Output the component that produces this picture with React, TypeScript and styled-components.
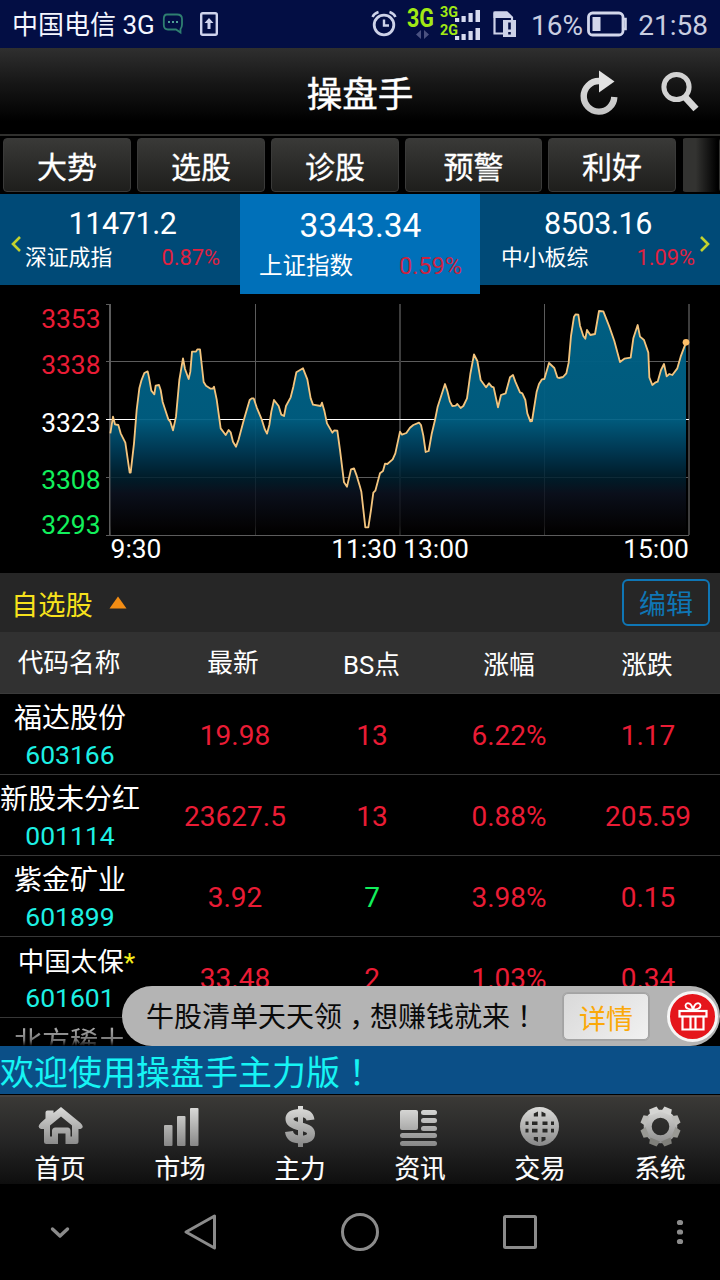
import React from "react";
import styled, { createGlobalStyle, css } from "styled-components";

const RED = "#ea1c35";
const GREEN = "#12f05c";

const GlobalStyle = createGlobalStyle`
  * { box-sizing: border-box; }
  body { margin: 0; background: #000; }
`;

const Screen = styled.div`
  position: relative;
  width: 720px;
  height: 1280px;
  overflow: hidden;
  display: flex;
  flex-direction: column;
  background: #000;
  color: #fff;
  font-family: Roboto, "Noto Sans CJK SC", sans-serif;
  white-space: nowrap;
`;

/* ---------- status bar ---------- */

const StatusBar = styled.header`
  flex: none;
  height: 48px;
  display: flex;
  align-items: center;
  justify-content: space-between;
  padding: 0 9px 0 12px;
  background: #030e44;
`;

const StatusGroup = styled.div`
  display: flex;
  align-items: center;
`;

const Carrier = styled.span`
  width: 150px;
  padding-top: 2px;
  font-size: 26px;
  line-height: 46px;
  color: #f4f6ff;
`;

const StatusText = styled.span<{ $width: number; $end?: boolean }>`
  width: ${(p) => p.$width}px;
  padding-top: 3px;
  text-align: ${(p) => (p.$end ? "right" : "center")};
  padding-right: ${(p) => (p.$end ? 3 : 0)}px;
  font-size: 28px;
  line-height: 45px;
  color: #c9cde0;
`;

/* ---------- title bar ---------- */

const TitleBar = styled.div`
  flex: none;
  height: 88px;
  display: grid;
  grid-template-columns: 160px 1fr 160px;
  align-items: center;
  background: linear-gradient(#2f2f2f, #171717 40%, #000 85%);
  border-bottom: 2px solid #30302e;
`;

const Title = styled.h1`
  grid-column: 2;
  margin: 0;
  padding-top: 7px;
  text-align: center;
  font-size: 35.6px;
  font-weight: 400;
  line-height: 44px;
  -webkit-text-stroke: 0.4px #fff;
`;

const TitleActions = styled.div`
  display: flex;
  gap: 38px;
  padding: 3px 0 0 18px;
`;

/* ---------- category tabs ---------- */

const Tabs = styled.nav`
  flex: none;
  height: 58px;
  display: flex;
  gap: 6px;
  padding: 2px 0 2px 3px;
  overflow: hidden;
`;

const Tab = styled.div<{ $width?: number; $fade?: boolean }>`
  flex: none;
  width: ${(p) => p.$width ?? 128}px;
  height: 54px;
  border-radius: 4px;
  border: 1px solid #3a3a39;
  background: linear-gradient(#393937, #1e1e1c);
  text-align: center;
  font-size: 30px;
  line-height: 57px;
  -webkit-text-stroke: 0.3px #fff;
  ${(p) =>
    p.$fade &&
    css`
      border-color: transparent;
      background: linear-gradient(90deg, #333331 35%, #000 95%);
    `}
`;

/* ---------- index strip ---------- */

const IndexStrip = styled.section`
  position: relative;
  flex: none;
  height: 100px;
  display: flex;
  align-items: flex-start;
`;

const IndexCell = styled.div<{ $active?: boolean; $pad: string }>`
  width: 240px;
  height: ${(p) => (p.$active ? 100 : 91)}px;
  padding: ${(p) => p.$pad};
  background: ${(p) => (p.$active ? "#0070b9" : "#004a77")};
`;

const IndexValue = styled.div<{ $active?: boolean }>`
  text-align: center;
  font-size: ${(p) => (p.$active ? 33.5 : 30.5)}px;
  letter-spacing: ${(p) => (p.$active ? 0 : -0.4)}px;
  line-height: 36px;
`;

const IndexFoot = styled.div<{ $active?: boolean }>`
  display: flex;
  justify-content: space-between;
  align-items: center;
  font-size: ${(p) => (p.$active ? 23.5 : 21.8)}px;
  line-height: ${(p) => (p.$active ? 45 : 32)}px;
`;

const Percent = styled.span<{ $active?: boolean }>`
  color: ${(p) => (p.$active ? "#cb2340" : "#e0213f")};
`;

const Arrow = styled.svg<{ $side: "left" | "right" }>`
  position: absolute;
  top: 41px;
  ${(p) => p.$side}: 9px;
`;

/* ---------- chart ---------- */

const ChartPanel = styled.section`
  flex: none;
  height: 279px;
`;

const ChartSvg = styled.svg`
  display: block;
  font-family: Roboto, sans-serif;
  font-size: 26.4px;
`;

/* ---------- watch list ---------- */

const SectionBar = styled.div`
  flex: none;
  height: 59px;
  display: flex;
  align-items: center;
  padding: 0 10px 0 11px;
  background: #262626;
`;

const SectionTitle = styled.h2`
  margin: 0 16px 0 0;
  padding-top: 6px;
  font-size: 27.2px;
  font-weight: 400;
  line-height: 36px;
  color: #f7e21c;
`;

const EditButton = styled.button`
  width: 88px;
  height: 47px;
  margin-left: auto;
  padding: 5px 0 0;
  border: 2px solid #0f76b5;
  border-radius: 6px;
  background: transparent;
  color: #0f76b5;
  font: 27px/38px Roboto, "Noto Sans CJK SC", sans-serif;
`;

const columns = css`
  display: grid;
  grid-template-columns: 140px 190px 84px 190px 88px;
  justify-items: center;
`;

const TableHead = styled.div`
  ${columns}
  flex: none;
  height: 62px;
  background: #313131;
  border-bottom: 1px solid #3a3a3a;
  font-size: 25.7px;
`;

const HeadCell = styled.span<{ $drop?: number; $shift?: number }>`
  padding-top: ${(p) => p.$drop ?? 1}px;
  padding-right: ${(p) => p.$shift ?? 0}px;
  line-height: 60px;
`;

const TableBody = styled.div`
  flex: none;
  height: 352px;
  overflow: hidden;
`;

const Row = styled.div<{ $fade?: boolean }>`
  ${columns}
  height: 81px;
  border-bottom: 1px solid #373737;
  ${(p) =>
    p.$fade &&
    css`
      height: 28px;
      overflow: hidden;
      border: 0;
      -webkit-mask-image: linear-gradient(rgba(0, 0, 0, 0.65) 40%, rgba(0, 0, 0, 0.45) 80%, transparent);
      mask-image: linear-gradient(rgba(0, 0, 0, 0.65) 40%, rgba(0, 0, 0, 0.45) 80%, transparent);
    `}
`;

const Stock = styled.div`
  display: flex;
  flex-direction: column;
  align-items: center;
  padding-top: 6px;
`;

const StockName = styled.span<{ $starred?: boolean }>`
  padding-left: ${(p) => (p.$starred ? 13 : 0)}px;
  font-size: ${(p) => (p.$starred ? 26.5 : 28)}px;
  line-height: 38px;
`;

const Star = styled.span`
  color: #f5ee1a;
`;

const StockCode = styled.span`
  font-size: 26.5px;
  line-height: 34px;
  color: #1df0e4;
`;

const Value = styled.span<{ $color?: string }>`
  padding-top: 2px;
  font-size: 28px;
  line-height: 80px;
  color: ${(p) => p.$color ?? RED};
`;

/* ---------- promo bubble ---------- */

const Promo = styled.aside`
  position: absolute;
  left: 122px;
  top: 986px;
  width: 598px;
  height: 60px;
  display: flex;
  align-items: center;
  padding: 0 2px 0 24px;
  border-radius: 30px;
  background: #b4b4b4;
  color: #0a0a0a;
`;

const PromoText = styled.span`
  width: 417px;
  padding-top: 4px;
  font-size: 28px;
  line-height: 40px;
`;

/* punctuation centred in its full-width cell */
const Punct = styled.span<{ $lower?: boolean }>`
  font-family: "Noto Sans CJK TC", sans-serif;
  line-height: 1;
  vertical-align: ${(p) => (p.$lower ? "-0.3em" : "baseline")};
`;

const PromoButton = styled.button`
  width: 86px;
  height: 47px;
  padding: 7px 0 0;
  border: 1px solid #a3a3a3;
  border-radius: 5px;
  background: linear-gradient(135deg, #d9d9d9, #f1f1f1);
  box-shadow: 0 0 0 1px #a6a6a6;
  color: #fba90a;
  font: 27px/38px Roboto, "Noto Sans CJK SC", sans-serif;
`;

const GiftBadge = styled.div`
  margin-left: auto;
  width: 51px;
  height: 51px;
  border-radius: 50%;
  border: 3px solid #f6f6f6;
  background: #e5161c;
  display: flex;
  align-items: center;
  justify-content: center;
`;

/* ---------- bottom ---------- */

const Marquee = styled.div`
  flex: none;
  height: 48px;
  background: #0b4f87;
  color: #16f4f4;
  font-size: 34px;
  line-height: 54px;
`;

const TabBar = styled.nav`
  flex: none;
  height: 90px;
  display: grid;
  grid-template-columns: repeat(6, 1fr);
  background: linear-gradient(#3b3a37, #262626 50%, #0e0e0e);
  border-top: 1px solid #000;
  box-shadow: inset 0 2px 0 #45413c;
`;

const TabItem = styled.div`
  display: flex;
  flex-direction: column;
  align-items: center;
  padding-top: 6px;
  font-size: 25.6px;
  line-height: 40px;
  -webkit-text-stroke: 0.2px #fff;
`;

const TabIcon = styled.svg`
  width: 48px;
  height: 48px;
`;

const NavBar = styled.nav`
  flex: none;
  height: 96px;
  display: flex;
  align-items: center;
  justify-content: space-between;
  padding: 0 20px 0 40px;
  background: #000;
`;

const NavIcon = styled.svg`
  width: 40px;
  height: 40px;
  fill: none;
  stroke: #8b8b8b;
  stroke-width: 3.4;
  stroke-linejoin: round;
  stroke-linecap: round;
  &:first-child { margin-right: -20px; }
`;

/* ---------- data ---------- */

// Plot coordinates of each trading session, three units per pixel.
const morning =
  "331,430 339,380 345,403 355,405 362,430 376,458 389,548 392,548 402,460 410,360 418,295 424,272 433,249 443,244 447,262 454,302 463,313 467,287 477,285 482,300 488,336 505,388 511,395 519,421 528,380 538,270 549,205 555,237 566,267 571,245 576,185 588,185 592,178 600,178 611,276 618,287 632,296 638,296 642,290 650,328 662,415 677,435 686,420 692,427 699,455 708,470 716,448 732,388 749,330 755,325 761,325 770,352 785,388 794,417 801,431 808,405 814,365 822,330 836,348 844,374 852,378 858,348 872,322 880,290 889,247 909,235 922,268 932,325 939,344 962,348 966,338 973,362 981,400 997,428 1003,421 1012,422 1020,480 1032,577 1041,590 1053,538 1062,535 1070,557 1080,590 1084,605 1096,712 1105,712 1113,660 1120,608 1126,602 1140,550 1149,543 1155,521 1162,522 1178,508 1186,490 1200,425";
const afternoon =
  "1206,434 1219,429 1230,413 1240,405 1257,398 1263,405 1270,437 1277,486 1286,483 1295,432 1305,390 1313,350 1335,282 1342,303 1350,335 1357,348 1367,347 1372,342 1382,354 1390,348 1401,325 1411,252 1422,193 1432,213 1442,270 1458,292 1467,280 1475,290 1481,292 1494,352 1503,315 1517,310 1530,262 1539,255 1546,275 1560,307 1567,310 1576,330 1582,370 1591,394 1596,393 1610,305 1617,282 1626,268 1633,267 1647,219 1663,234 1672,262 1677,264 1689,261 1699,250 1706,218 1713,138 1722,80 1727,73 1735,74 1740,107 1750,138 1756,146 1761,120 1771,135 1785,132 1797,63 1810,64 1828,110 1843,153 1860,216 1873,206 1892,203 1900,145 1913,105 1920,140 1932,150 1945,188 1948,262 1957,285 1967,277 1973,275 1983,240 1992,222 2000,259 2008,252 2017,255 2032,235 2042,200 2058,157";
const series = `${morning} ${afternoon}`;

const priceLabels = [
  { text: "3353", y: 34, color: RED },
  { text: "3338", y: 80, color: RED },
  { text: "3323", y: 138, color: "#fff" },
  { text: "3308", y: 195, color: GREEN },
  { text: "3293", y: 240, color: GREEN },
];

const timeLabels = [
  { text: "9:30", x: 136 },
  { text: "11:30", x: 364 },
  { text: "13:00", x: 436 },
  { text: "15:00", x: 656 },
];

type StockRow = {
  name: string;
  code: string;
  last: string;
  bs: string;
  bsColor?: string;
  rate: string;
  change: string;
  starred?: boolean;
};

const stocks: StockRow[] = [
  { name: "福达股份", code: "603166", last: "19.98", bs: "13", rate: "6.22%", change: "1.17" },
  { name: "新股未分红", code: "001114", last: "23627.5", bs: "13", rate: "0.88%", change: "205.59" },
  { name: "紫金矿业", code: "601899", last: "3.92", bs: "7", bsColor: GREEN, rate: "3.98%", change: "0.15" },
  { name: "中国太保", code: "601601", last: "33.48", bs: "2", rate: "1.03%", change: "0.34", starred: true },
];

/* ---------- pieces ---------- */

const StatusIconsLeft = () => (
  <svg width="60" height="30" viewBox="0 0 60 30" fill="none">
    <path
      d="M5 5.5H15Q20 5.5 20 10V15.500Q20 18 18.500 20V23.500L14 20.500H6Q1.800 20.500 1.800 16V10Q1.800 5.500 5 5.500Z"
      stroke="#2f7f70"
      strokeWidth="1.8"
    />
    <path d="M6 13h2M10 13h2M14 13h2" stroke="#4f9f96" strokeWidth="2" />
    <rect x="39.200" y="4.200" width="15.600" height="21.600" rx="1.500" stroke="#cfd3ec" strokeWidth="2.400" />
    <path d="M47 9l4.500 5h-3v6h-3v-6h-3z" fill="#cfd3ec" />
  </svg>
);

const StatusIconsRight = () => (
  <svg width="160" height="48" viewBox="370 0 160 48">
    <g fill="none" stroke="#cdd2e8" strokeWidth="2.800">
      <circle cx="384" cy="25" r="9.800" />
      <path d="M384 19.500V25.500H389" strokeWidth="2.400" />
      <path d="M372.500 17Q374 13.500 378.500 12M395.500 17Q394 13.500 389.500 12" strokeWidth="2.400" />
    </g>
    <g fill="#a2ea14" fontFamily="Roboto, sans-serif" fontWeight="700">
      <text x="407" y="26.500" fontSize="25" textLength="27" lengthAdjust="spacingAndGlyphs">3G</text>
      <text x="440" y="17" fontSize="15" textLength="18" lengthAdjust="spacingAndGlyphs">3G</text>
      <text x="440" y="34.500" fontSize="15" textLength="18" lengthAdjust="spacingAndGlyphs">2G</text>
    </g>
    <path d="M421 30v9l-5-4.500zM424 30v9l5-4.500z" fill="#4a5180" />
    {[22, 40].map((y) => (
      <g key={y} fill="#d7dbef">
        <rect x="455" y={y - 4} width="4.200" height="4" />
        <rect x="461.500" y={y - 6} width="4.200" height="6" />
        <rect x="468.500" y={y - 9} width="4.200" height="9" />
        <rect x="475.500" y={y - 12} width="4.500" height="12" />
      </g>
    ))}
    <path d="M494.500 12.500H507L512 17.500V21M494.500 12.500V33.500H504" fill="none" stroke="#cdd2e8" strokeWidth="2.200" />
    <path d="M493.500 11.500H507L513 18H493.500z" fill="#cdd2e8" />
    <rect x="503" y="20" width="13" height="17" fill="#cdd2e8" />
    <path d="M509.500 22.500v7M509.500 32v2.500" stroke="#030e44" strokeWidth="2.600" />
  </svg>
);

const Battery = () => (
  <svg width="44" height="28" viewBox="0 0 44 28" fill="none">
    <rect x="4.500" y="3" width="34.500" height="22" rx="4" stroke="#d3d7eb" strokeWidth="2.800" />
    <rect x="8.500" y="7" width="8" height="14" fill="#d3d7eb" />
    <path d="M39.500 9h2v10h-2" stroke="#d3d7eb" strokeWidth="2.600" />
  </svg>
);

const RefreshIcon = () => (
  <svg width="42" height="46" viewBox="0 0 42 46">
    <path d="M21 11A15.300 15.300 0 1 0 36.300 27" fill="none" stroke="url(#silver)" strokeWidth="6.400" />
    <path d="M21 0.500L36.500 11.500L21 22.500z" fill="#e2e2e2" />
  </svg>
);

const SearchIcon = () => (
  <svg width="42" height="46" viewBox="0 0 42 46" fill="none">
    <circle cx="18.500" cy="17" r="12.600" stroke="#d2d2d2" strokeWidth="5" />
    <path d="M27 27L38 39" stroke="#d6d6d6" strokeWidth="7" />
  </svg>
);

const IntradayChart = () => (
  <ChartSvg width="720" height="279" viewBox="0 294 720 279">
    <defs>
      <linearGradient id="area" gradientUnits="userSpaceOnUse" x1="0" y1="0" x2="0" y2="735">
        <stop offset="0" stopColor="#005f83" />
        <stop offset="0.53" stopColor="#005f83" stopOpacity="0.95" />
        <stop offset="0.66" stopColor="#003b57" stopOpacity="0.92" />
        <stop offset="0.77" stopColor="#00202f" stopOpacity="0.85" />
        <stop offset="0.83" stopColor="#0c1220" stopOpacity="0.85" />
        <stop offset="0.96" stopColor="#050406" stopOpacity="0.8" />
        <stop offset="1" stopColor="#000" stopOpacity="0.5" />
      </linearGradient>
    </defs>
    <g stroke="#5c5c5c" strokeWidth="1">
      <path d="M106 361.500H689M106 477.500H689M106 535.500H689" />
      <path d="M255.500 304V535M544.500 304V535" />
      <path d="M400 304V535M689 304V535" strokeWidth="2" stroke="#3d3d3d" />
      <path d="M106 304.500H111" />
      <path d="M110 304V535" strokeWidth="2" />
    </g>
    <path d="M106 419.500H689" stroke="#fff" strokeWidth="1.200" />
    <g transform="translate(0 290) scale(0.333333)">
      <polygon points={`331,735 ${series} 2058,735`} fill="url(#area)" />
      <polyline points={series} fill="none" stroke="#f3c47e" strokeWidth="5.500" strokeLinejoin="round" />
      <circle cx="2058" cy="157" r="10" fill="#fcbe68" />
    </g>
    {priceLabels.map((l) => (
      <text key={l.text} x="100.500" y={l.y + 294} fill={l.color} textAnchor="end">
        {l.text}
      </text>
    ))}
    {timeLabels.map((l) => (
      <text key={l.text} x={l.x} y="558" fill="#fff" textAnchor="middle">
        {l.text}
      </text>
    ))}
  </ChartSvg>
);

const gearTeeth = Array.from({ length: 8 }, (_, i) => i * 45 + 22.5);

const tabItems = [
  {
    label: "首页",
    icon: (
      <path
        d="M25 6L44.500 22Q49 26.500 44.500 28H42.500V40.500Q42.500 43 40 43H29.500V32.500H22V43H10.500Q8 43 8 40.500V28H5Q0.500 26.500 4.500 22L9.500 17.500V11.500Q9.500 9.500 11.500 9.500H17.500V12ZM25 15.500L14 24.500V35.500H16V30Q16 26.500 19.500 26.500H31.500Q34.500 26.500 34.500 30V35.500H36V24.500Z"
        fillRule="evenodd"
      />
    ),
  },
  {
    label: "市场",
    icon: (
      <>
        <rect x="8" y="24" width="8.500" height="21" rx="1" />
        <rect x="21" y="15" width="8.500" height="30" rx="1" />
        <rect x="34" y="7" width="8.500" height="38" rx="1" />
      </>
    ),
  },
  {
    label: "主力",
    icon: (
      <>
        <path
          d="M34.500 19Q33.500 12 24.500 12Q13.500 12 13.500 18Q13.500 23.500 24.500 25.500Q35 27.500 35 32.500Q35 38.500 25 38.500Q14 38.500 13 30.500"
          fill="none"
          stroke="url(#metal)"
          strokeWidth="8"
        />
        <path d="M22 5h5v41h-5z" />
      </>
    ),
  },
  {
    label: "资讯",
    icon: (
      <>
        <rect x="4" y="9" width="18" height="20" rx="2" />
        <rect x="25" y="9" width="16" height="5" rx="2.500" />
        <rect x="25" y="17" width="16" height="5" rx="2.500" />
        <rect x="25" y="25" width="16" height="5" rx="2.500" />
        <rect x="4" y="32" width="37" height="5" rx="2.500" />
        <rect x="4" y="40" width="37" height="5" rx="2.500" />
      </>
    ),
  },
  {
    label: "交易",
    icon: (
      <>
        <circle cx="23.500" cy="25.500" r="19.500" />
        <path
          d="M17.800 15.500V12.500L22 10.500V15.500ZM25.500 10.500L29.500 12.500V15.500H25.500ZM17.800 36V39L22 41V36ZM25.500 41L29.500 39V36H25.500Z"
          fill="#292927"
        />
        <path
          d="M16 22.200H21.500M26.500 22.200H31.500M16 29.600H21.500M26.500 29.600H31.500M9.500 22.200H12.500M35 22.200H38M9.500 29.600H12.500M35 29.600H38"
          fill="none"
          stroke="#292927"
          strokeWidth="3.600"
        />
      </>
    ),
  },
  {
    label: "系统",
    icon: (
      <>
        <circle cx="24.500" cy="25.500" r="12.800" fill="none" stroke="url(#metal)" strokeWidth="8" />
        {gearTeeth.map((a) => (
          <path key={a} d="M19.300 11.500L20.500 5.500H28.500L29.700 11.500z" transform={`rotate(${a} 24.5 25.5)`} fill={`hsl(60 2% ${Math.round(66 + 18 * Math.cos((a * Math.PI) / 180))}%)`} />
        ))}
      </>
    ),
  },
];

const GiftIcon = () => (
  <svg width="32" height="32" viewBox="0 0 32 32" fill="none" stroke="#fff" strokeWidth="2.200">
    <rect x="2.500" y="11" width="27" height="5.500" />
    <path d="M5.500 16.500V29.500H26.500V16.500M13.500 17V29M18.500 17V29" />
    <path
      d="M16 9.500Q8.500 9.500 8.500 5.500Q9 2.500 12.500 3.500Q15 5 16 9.500Q17 5 19.500 3.500Q23 2.500 23.500 5.500Q23.500 9.500 16 9.500Z"
      strokeWidth="1.800"
    />
  </svg>
);

const GradientDefs = styled.svg`
  position: absolute;
  width: 0;
  height: 0;
`;

export default function App() {
  return (
    <Screen>
      <GlobalStyle />
      <GradientDefs>
        <defs>
          <linearGradient id="metal" gradientUnits="userSpaceOnUse" x1="0" y1="5" x2="0" y2="46">
            <stop offset="0" stopColor="#dededc" />
            <stop offset="1" stopColor="#858585" />
          </linearGradient>
          <linearGradient id="silver" gradientUnits="userSpaceOnUse" x1="0" y1="0" x2="0" y2="46">
            <stop offset="0" stopColor="#e2e2e2" />
            <stop offset="1" stopColor="#c2c2c2" />
          </linearGradient>
        </defs>
      </GradientDefs>

      <StatusBar>
        <StatusGroup>
          <Carrier>中国电信 3G</Carrier>
          <StatusIconsLeft />
        </StatusGroup>
        <StatusGroup>
          <StatusIconsRight />
          <StatusText $width={54}>16%</StatusText>
          <Battery />
          <StatusText $width={83} $end>21:58</StatusText>
        </StatusGroup>
      </StatusBar>

      <TitleBar>
        <Title>操盘手</Title>
        <TitleActions>
          <RefreshIcon />
          <SearchIcon />
        </TitleActions>
      </TitleBar>

      <Tabs>
        <Tab>大势</Tab>
        <Tab>选股</Tab>
        <Tab>诊股</Tab>
        <Tab $width={137}>预警</Tab>
        <Tab>利好</Tab>
        <Tab $width={38} $fade />
      </Tabs>

      <IndexStrip>
        <IndexCell $pad="12px 20px 0 25px">
          <IndexValue>11471.2</IndexValue>
          <IndexFoot>
            <span>深证成指</span>
            <Percent>0.87%</Percent>
          </IndexFoot>
        </IndexCell>
        <IndexCell $active $pad="14px 18px 0 19px">
          <IndexValue $active>3343.34</IndexValue>
          <IndexFoot $active>
            <span>上证指数</span>
            <Percent $active>0.59%</Percent>
          </IndexFoot>
        </IndexCell>
        <IndexCell $pad="12px 25px 0 21px">
          <IndexValue>8503.16</IndexValue>
          <IndexFoot>
            <span>中小板综</span>
            <Percent>1.09%</Percent>
          </IndexFoot>
        </IndexCell>
        <Arrow $side="left" width="12" height="18" viewBox="0 0 12 18" fill="none" stroke="#c3d22e" strokeWidth="2.600">
          <path d="M11 2L4 9L11 16" />
        </Arrow>
        <Arrow $side="right" width="12" height="18" viewBox="0 0 12 18" fill="none" stroke="#c3d22e" strokeWidth="2.600">
          <path d="M2 2L9 9L2 16" />
        </Arrow>
      </IndexStrip>

      <ChartPanel>
        <IntradayChart />
      </ChartPanel>

      <SectionBar>
        <SectionTitle>自选股</SectionTitle>
        <svg width="18" height="13" viewBox="0 0 18 13">
          <path d="M9 0.500L17.500 12.500H0.500z" fill="#f38d14" />
        </svg>
        <EditButton>编辑</EditButton>
      </SectionBar>

      <TableHead>
        <HeadCell $shift={2}>代码名称</HeadCell>
        <HeadCell $shift={4}>最新</HeadCell>
        <HeadCell $drop={3} $shift={1}>BS点</HeadCell>
        <HeadCell $drop={3}>涨幅</HeadCell>
        <HeadCell $drop={3} $shift={2}>涨跌</HeadCell>
      </TableHead>

      <TableBody>
        {stocks.map((s) => (
          <Row key={s.code}>
            <Stock>
              <StockName $starred={s.starred}>
                {s.name}
                {s.starred && <Star>*</Star>}
              </StockName>
              <StockCode>{s.code}</StockCode>
            </Stock>
            <Value>{s.last}</Value>
            <Value $color={s.bsColor}>{s.bs}</Value>
            <Value>{s.rate}</Value>
            <Value>{s.change}</Value>
          </Row>
        ))}
        <Row $fade>
          <Stock>
            <StockName>北方稀土</StockName>
          </Stock>
        </Row>
      </TableBody>

      <Marquee>
        欢迎使用操盘手主力版<Punct>！</Punct>
      </Marquee>

      <TabBar>
        {tabItems.map((t) => (
          <TabItem key={t.label}>
            <TabIcon viewBox="0 0 48 48" fill="url(#metal)">
              {t.icon}
            </TabIcon>
            {t.label}
          </TabItem>
        ))}
      </TabBar>

      <NavBar>
        <NavIcon viewBox="0 0 40 40">
          <path d="M12.500 17L20 24L27.500 17" />
        </NavIcon>
        <NavIcon viewBox="0 0 40 40">
          <path d="M34.500 4V36L6 20Z" strokeWidth="3" />
        </NavIcon>
        <NavIcon viewBox="0 0 40 40">
          <circle cx="20" cy="20" r="17.500" strokeWidth="3" />
        </NavIcon>
        <NavIcon viewBox="0 0 40 40">
          <rect x="4.500" y="4.500" width="31" height="31" rx="1" strokeWidth="3" />
        </NavIcon>
        <NavIcon viewBox="0 0 40 40">
          <path d="M19.500 10.500h1M19.500 20h1M19.500 29.500h1" strokeWidth="5.200" />
        </NavIcon>
      </NavBar>

      <Promo>
        <PromoText>
          牛股清单天天领<Punct $lower>，</Punct>想赚钱就来<Punct>！</Punct>
        </PromoText>
        <PromoButton>详情</PromoButton>
        <GiftBadge>
          <GiftIcon />
        </GiftBadge>
      </Promo>
    </Screen>
  );
}
